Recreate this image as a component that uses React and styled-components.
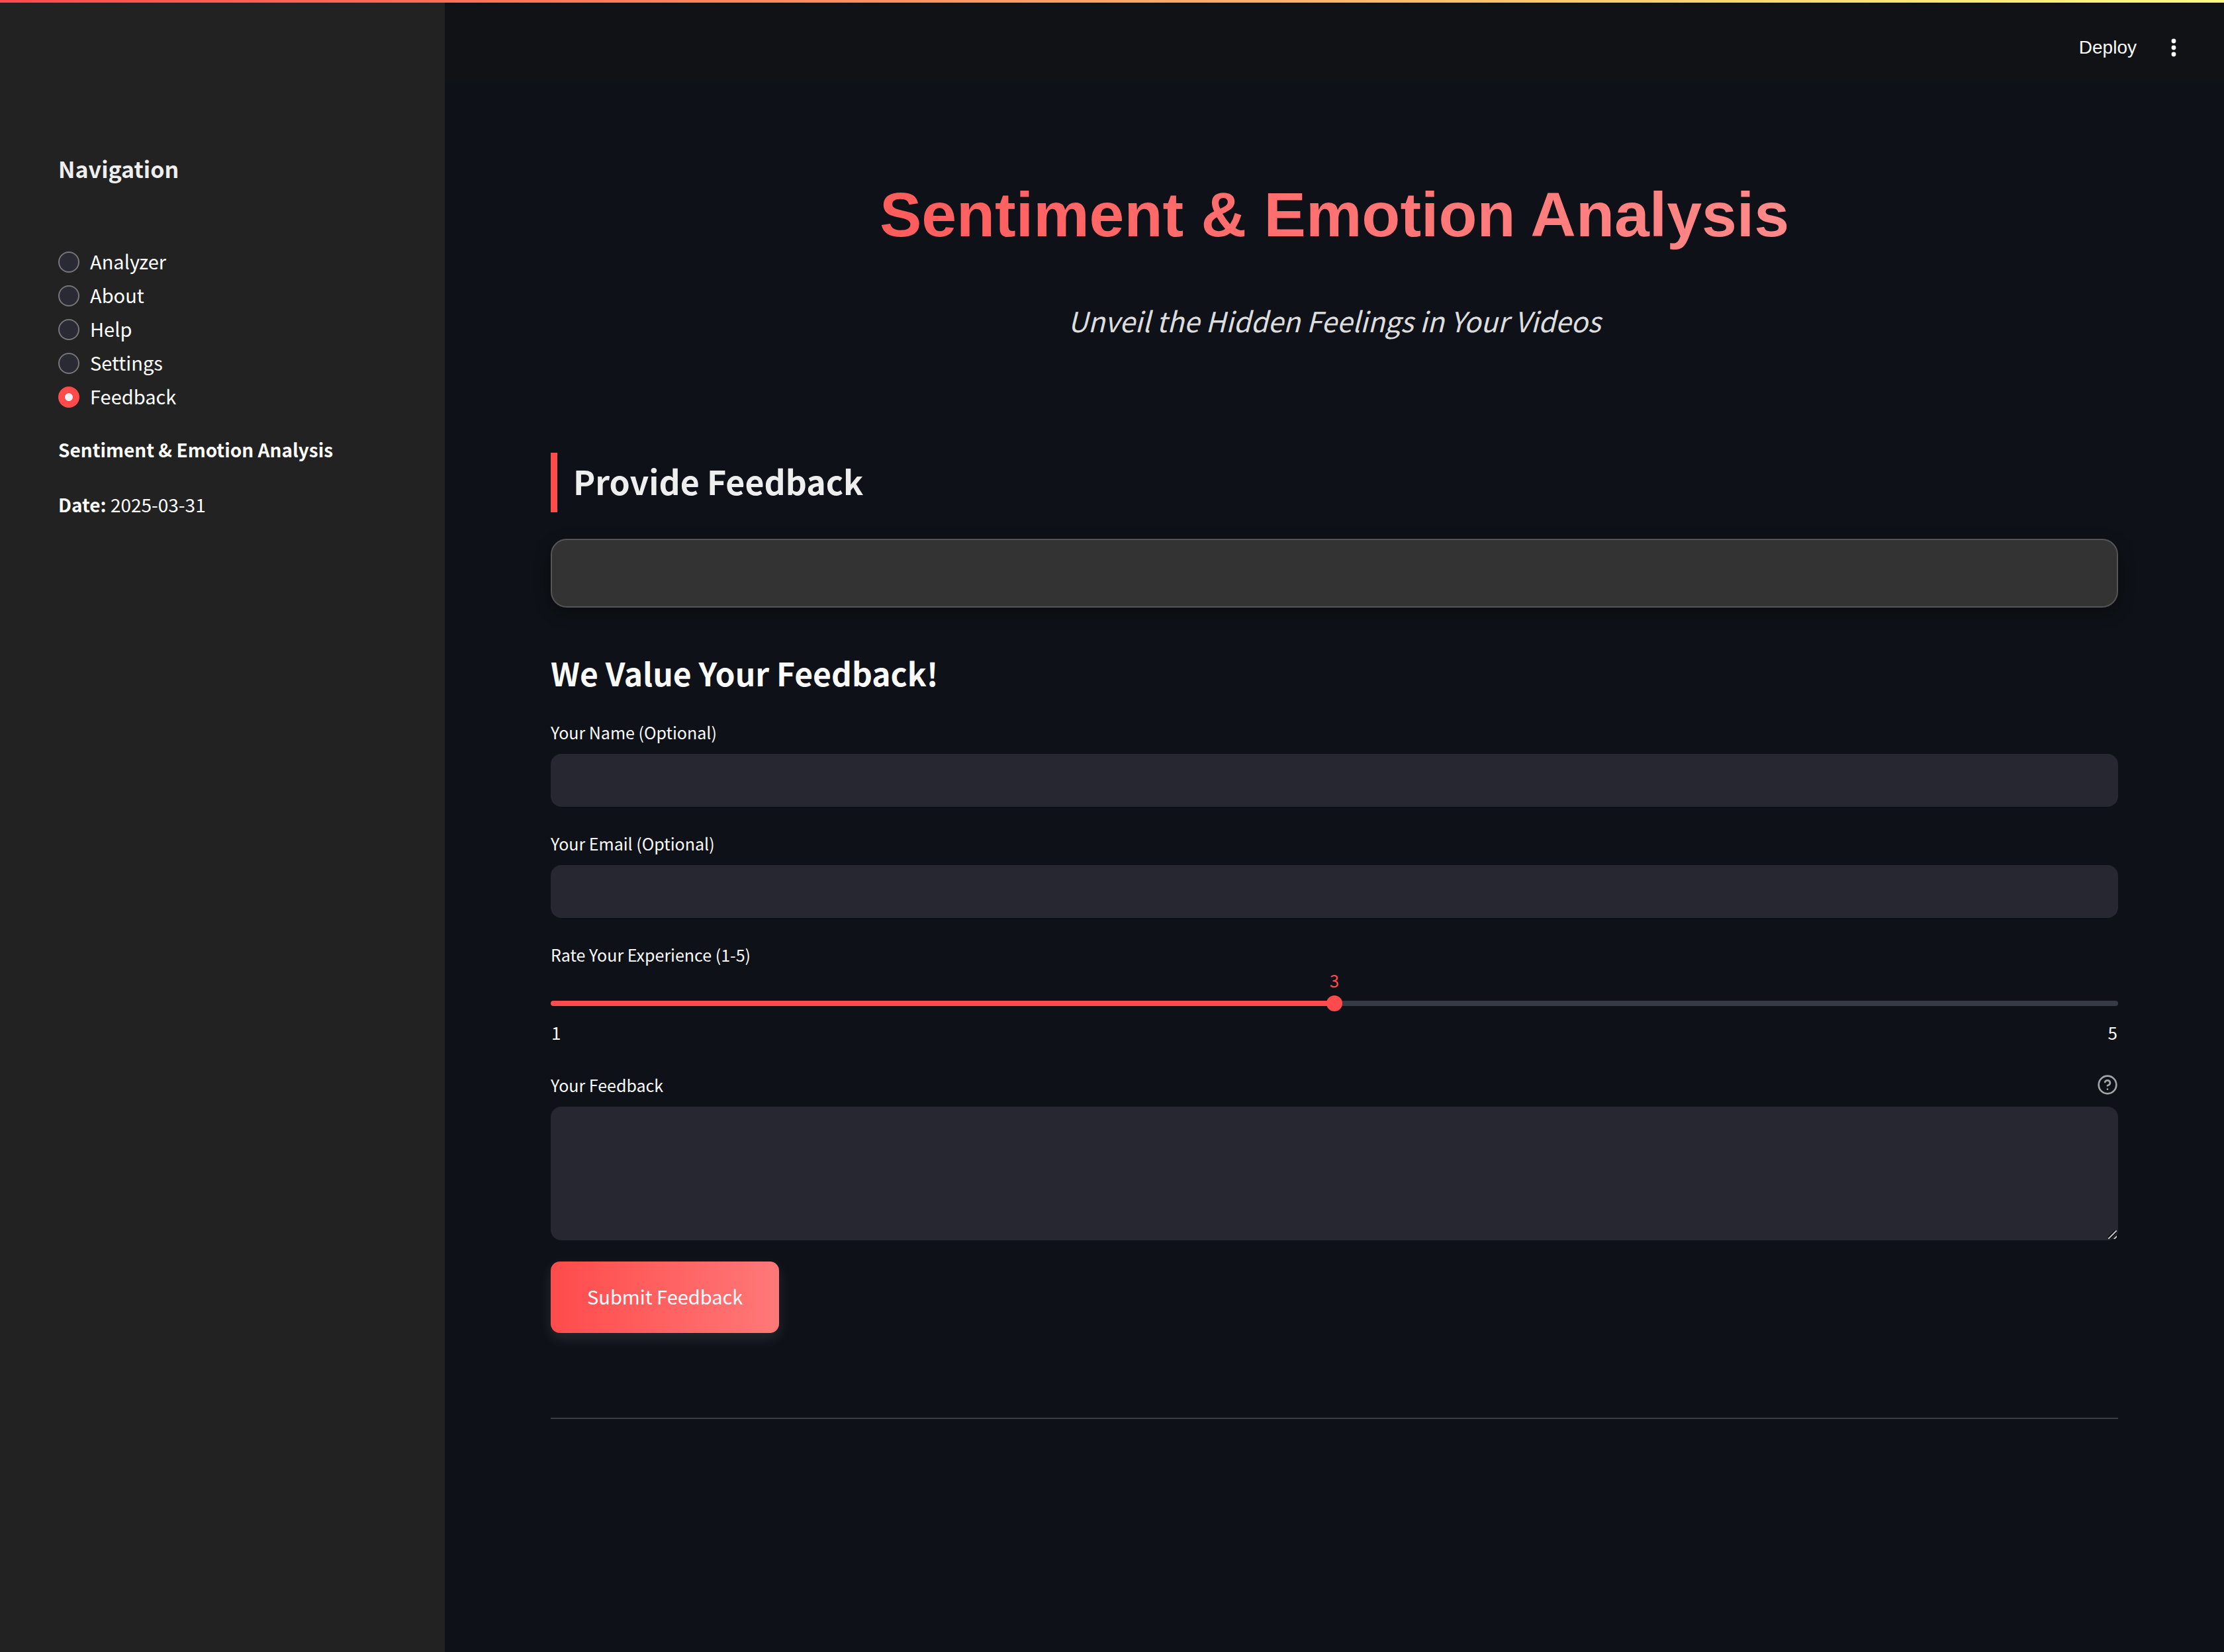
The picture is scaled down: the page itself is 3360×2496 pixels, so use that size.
import React, { useState } from "react";
import styled, { createGlobalStyle } from "styled-components";

const sans = `"Noto Sans CJK JP", "Noto Sans", sans-serif`;
const helvetica = `"Liberation Sans", Arial, sans-serif`;

const GlobalStyle = createGlobalStyle`
  *, *::before, *::after { box-sizing: border-box; }
  body { margin: 0; background: #0e1117; color: #fafafa; font-family: ${sans}; }
  h1, h2, h3, p, fieldset { margin: 0; padding: 0; border: 0; }
  input, textarea, button { font: inherit; color: inherit; }
`;

const Page = styled.div`
  display: grid;
  grid-template-columns: 672px 1fr;
  grid-template-rows: 4px 1fr;
  min-height: 100vh;
`;

const Decoration = styled.div`
  grid-column: 1 / -1;
  background: linear-gradient(90deg, #ff4b4b, #fffd80);
`;

const Sidebar = styled.aside`
  background: #222222;
  padding: 226px 88px 80px;
`;

const SidebarTitle = styled.h2`
  font-size: 34px;
  line-height: 50px;
  font-weight: 600;
  color: #eeeeee;
`;

const RadioGroup = styled.fieldset`
  && { margin: 90px 0 29px; }
  display: flex;
  flex-direction: column;
`;

const RadioRow = styled.label`
  display: flex;
  align-items: center;
  gap: 16px;
  height: 51px;
  font-size: 29px;
  line-height: 51px;
  color: #ffffff;
`;

const RadioText = styled.span`
  padding-bottom: 3px;
`;

const Radio = styled.input`
  appearance: none;
  width: 32px;
  height: 32px;
  margin: 0;
  border: 2px solid #767678;
  border-radius: 50%;
  background: #2a2a34;

  &:checked {
    border: 10px solid #ff4b4b;
    background: #f0f2f6;
  }
`;

const SidebarText = styled.p`
  font-size: 28px;
  line-height: 51px;
  color: #ffffff;

  & + & { margin-top: 32px; }
`;

const Main = styled.main`
  min-width: 0;
`;

const Toolbar = styled.header`
  display: flex;
  justify-content: flex-end;
  align-items: center;
  gap: 40px;
  height: 118px;
  padding: 18px 60px 0 0;
  background: #111215;
`;

const ToolbarButton = styled.button`
  display: flex;
  padding: 0;
  border: 0;
  background: none;
  color: #fafafa;
  font-family: ${helvetica};
  font-size: 28px;
  line-height: 36px;
`;

const Content = styled.div`
  padding: 144px 160px 160px;
`;

const Title = styled.h1`
  font-family: ${helvetica};
  font-size: 95px;
  line-height: 116px;
  font-weight: 700;
  text-align: center;
  color: transparent;
  background: linear-gradient(90deg, #ff4b4b, #ff9999);
  background-clip: text;
`;

const Subtitle = styled.p`
  && { margin: 68px 0 166px; }
  font-size: 42px;
  line-height: 68px;
  font-style: italic;
  text-align: center;
  color: #dddddd;
`;

const SectionTitle = styled.h2`
  && {
    padding: 0 0 6px 24px;
    border-left: 10px solid #ff4b4b;
  }
  font-size: 50px;
  line-height: 84px;
  font-weight: 700;
  color: #eeeeee;
`;

const Card = styled.div`
  height: 104px;
  margin: 40px 0 63px;
  background: #333333;
  border: 2px solid #555555;
  border-radius: 24px;
  box-shadow: 0 8px 24px rgba(0, 0, 0, 0.3);
`;

const FormTitle = styled.h3`
  font-size: 48px;
  line-height: 70px;
  font-weight: 600;
  color: #fafafa;
`;

const Form = styled.form`
  display: flex;
  flex-direction: column;
  align-items: stretch;
  padding-top: 37px;
`;

const Field = styled.div`
  display: flex;
  flex-direction: column;
  margin-bottom: ${(p) => p.$gap}px;
`;

const LabelRow = styled.div`
  display: flex;
  justify-content: space-between;
  align-items: center;
  margin-bottom: 15px;
`;

const Label = styled.label`
  font-size: 25px;
  line-height: 36px;
  color: #fafafa;
`;

const TextInput = styled.input`
  height: 80px;
  padding: 0 24px;
  border: 0;
  border-radius: 16px;
  background: #262730;
  font-size: 29px;
`;

const TextArea = styled.textarea`
  height: 202px;
  padding: 24px;
  border: 0;
  border-radius: 16px;
  background: #262730;
  font-size: 29px;
  resize: vertical;

  &::-webkit-resizer {
    background: linear-gradient(
        135deg,
        transparent 38%,
        #08080a 38%, #08080a 44%,
        #b4b4b6 44%, #b4b4b6 56%,
        #08080a 56%, #08080a 62%,
        transparent 62%, transparent 74%,
        #08080a 74%, #08080a 80%,
        #b4b4b6 80%, #b4b4b6 90%,
        transparent 90%
      ) 0 0 / 13px 13px no-repeat;
  }
`;

const SliderValue = styled.output`
  margin-top: -10px;
  font-size: 26px;
  line-height: 32px;
  text-align: center;
  color: #ff4b4b;
`;

const Slider = styled.input`
  appearance: none;
  height: 24px;
  margin: 7px 0 14px;
  background: transparent;

  &::-webkit-slider-runnable-track {
    height: 8px;
    border-radius: 4px;
    background: linear-gradient(90deg, #ff4b4b ${(p) => p.$fill}%, #363a45 ${(p) => p.$fill}%);
  }

  &::-webkit-slider-thumb {
    appearance: none;
    width: 24px;
    height: 24px;
    margin-top: -8px;
    border-radius: 50%;
    background: #ff4b4b;
  }
`;

const Ticks = styled.div`
  display: flex;
  justify-content: space-between;
  padding: 0 1px;
  font-size: 26px;
  line-height: 36px;
`;

const HelpButton = styled.button`
  display: flex;
  padding: 0;
  border: 0;
  background: none;
  color: #a3a4a5;
`;

const SubmitButton = styled.button`
  align-self: flex-start;
  padding: 26px 55px 30px;
  border: 0;
  border-radius: 14px;
  background: linear-gradient(90deg, #ff4b4b, #ff7878);
  box-shadow: 0 8px 20px rgba(255, 255, 255, 0.1);
  font-size: 29px;
  line-height: 52px;
  color: #ffffff;
`;

const Divider = styled.hr`
  height: 2px;
  margin: 128px 0 0;
  border: 0;
  background: #3c3d41;
`;

const pages = ["Analyzer", "About", "Help", "Settings", "Feedback"];

function KebabIcon() {
  return (
    <svg width="32" height="32" viewBox="0 0 32 32" fill="currentColor" aria-hidden="true">
      <circle cx="16" cy="6" r="3.4" />
      <circle cx="16" cy="16" r="3.4" />
      <circle cx="16" cy="26" r="3.4" />
    </svg>
  );
}

function HelpIcon() {
  return (
    <svg width="32" height="32" viewBox="0 0 24 24" fill="none" stroke="currentColor" strokeWidth="2" strokeLinecap="round" strokeLinejoin="round" aria-hidden="true">
      <circle cx="12" cy="12" r="10" />
      <path d="M9.09 9a3 3 0 0 1 5.83 1c0 2-3 3-3 3" />
      <path d="M12 17h.01" />
    </svg>
  );
}

export default function App() {
  const [page, setPage] = useState("Feedback");
  const [rating, setRating] = useState(3);

  return (
    <>
      <GlobalStyle />
      <Page>
        <Decoration />
        <Sidebar>
          <SidebarTitle>Navigation</SidebarTitle>
          <RadioGroup aria-label="Navigation">
            {pages.map((name) => (
              <RadioRow key={name}>
                <Radio type="radio" name="page" checked={page === name} onChange={() => setPage(name)} />
                <RadioText>{name}</RadioText>
              </RadioRow>
            ))}
          </RadioGroup>
          <SidebarText><strong>Sentiment &amp; Emotion Analysis</strong></SidebarText>
          <SidebarText><strong>Date:</strong> 2025-03-31</SidebarText>
        </Sidebar>
        <Main>
          <Toolbar>
            <ToolbarButton type="button">Deploy</ToolbarButton>
            <ToolbarButton type="button" aria-label="Main menu"><KebabIcon /></ToolbarButton>
          </Toolbar>
          <Content>
            <Title>Sentiment &amp; Emotion Analysis</Title>
            <Subtitle>Unveil the Hidden Feelings in Your Videos</Subtitle>
            <SectionTitle>Provide Feedback</SectionTitle>
            <Card />
            <FormTitle>We Value Your Feedback!</FormTitle>
            <Form onSubmit={(e) => e.preventDefault()}>
              <Field $gap={37}>
                <LabelRow><Label htmlFor="name">Your Name (Optional)</Label></LabelRow>
                <TextInput id="name" type="text" />
              </Field>
              <Field $gap={37}>
                <LabelRow><Label htmlFor="email">Your Email (Optional)</Label></LabelRow>
                <TextInput id="email" type="text" />
              </Field>
              <Field $gap={43}>
                <LabelRow><Label htmlFor="rating">Rate Your Experience (1-5)</Label></LabelRow>
                <SliderValue htmlFor="rating">{rating}</SliderValue>
                <Slider
                  id="rating"
                  type="range"
                  min="1"
                  max="5"
                  value={rating}
                  $fill={(rating - 1) * 25}
                  onChange={(e) => setRating(Number(e.target.value))}
                />
                <Ticks><span>1</span><span>5</span></Ticks>
              </Field>
              <Field $gap={32}>
                <LabelRow>
                  <Label htmlFor="feedback">Your Feedback</Label>
                  <HelpButton type="button" aria-label="Help"><HelpIcon /></HelpButton>
                </LabelRow>
                <TextArea id="feedback" />
              </Field>
              <SubmitButton type="submit">Submit Feedback</SubmitButton>
            </Form>
            <Divider />
          </Content>
        </Main>
      </Page>
    </>
  );
}
